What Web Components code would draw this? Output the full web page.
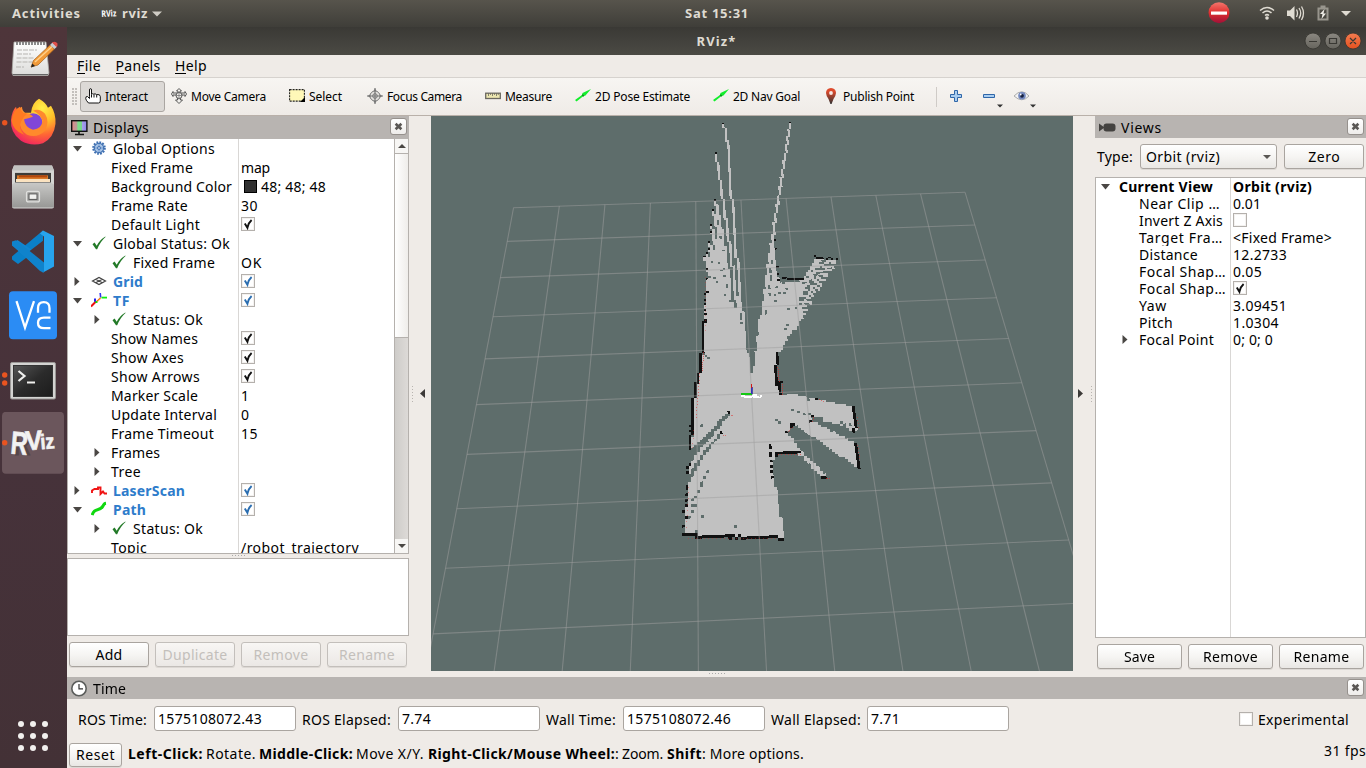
<!DOCTYPE html>
<html lang="en">
<head>
<meta charset="utf-8">
<title>RViz</title>
<style>
html,body{margin:0;height:100%;overflow:hidden}
body{font-family:"Noto Sans","Open Sans",sans-serif;font-size:14px;color:#000;background:#efebe7}
</style>
</head>
<body>
<rviz-desktop></rviz-desktop>
<script>
const define = (name, css, html, ready) => customElements.define(name, class extends HTMLElement {
  connectedCallback() {
    if (this.shadowRoot) return;
    const root = this.attachShadow({ mode: 'open' });
    const body = typeof html === 'function' ? html(this) : html;
    root.innerHTML = `<style>*{box-sizing:border-box}${css}</style>${body}`;
    if (ready) ready(this, root);
  }
});
const esc = s => s.replace(/&/g, '&amp;').replace(/</g, '&lt;');
// A single-line label that takes exactly w pixels.
const T = (text, w, bold) => `<fit-text w="${w}"${bold ? ' bold' : ''}>${esc(text)}</fit-text>`;
const svg = (w, h, inner, vb) => `<svg width="${w}" height="${h}" viewBox="${vb || `0 0 ${w} ${h}`}">${inner}</svg>`;

define('fit-text', `:host{display:inline-block;white-space:nowrap;line-height:normal;flex:none}
  :host([bold]){font-weight:700}span{display:inline-block}`, '<span><slot></slot></span>', (el, root) => {
  const w = +el.getAttribute('w'), span = root.querySelector('span');
  const natural = span.getBoundingClientRect().width, n = el.textContent.length;
  span.style.letterSpacing = (w - natural) / n + 'px';
  el.style.width = w + 'px';
});

define('check-box', `:host{display:block;width:14px;height:14px;border:1px solid #b4b0ac;background:#fff;box-shadow:inset 0 0 0 1px #f4f2f0;flex:none}
  svg{display:block}`, el => el.hasAttribute('on')
  ? svg(12, 12, `<path d="M2.8 5.6 5.4 9.8Q6.4 4.8 9.6 2" fill="none" stroke="${el.hasAttribute('blue') ? '#2a6db0' : '#111'}" stroke-width="1.9"/>`) : '');

define('push-button', `:host{display:flex;align-items:center;justify-content:center;height:26px;border:1px solid #a9a49f;border-radius:3px;
  background:linear-gradient(#fff,#f6f5f3 50%,#e9e7e4);box-shadow:0 1px 0 #dcd8d4}
  :host([disabled]){color:#c3bfbb;border-color:#c3bfbb;background:linear-gradient(#f8f6f4,#ebe8e5)}`, '<slot></slot>');

define('panel-title', `:host{display:flex;align-items:center;height:23px;background:#b8b4b1;padding:0 2px 0 4px}
  .i{width:17px;height:17px;margin-right:5px}.i svg{display:block}
  .x{margin-left:auto;width:17px;height:17px;border:1px solid #96918d;border-radius:3px;background:linear-gradient(#fff,#eeecea);margin-top:var(--x-shift,-3px)}
  .x svg{display:block}`,
  `<div class="i"><slot name="icon"></slot></div><slot></slot>
   <div class="x">${svg(15, 15, '<path d="M4.6 4.8l5.8 5.4M10.4 4.8l-5.8 5.4" stroke="#5a5754" stroke-width="2.6"/>')}</div>`);

const ICONS = {
  gear: svg(16, 16, '<circle cx="8" cy="8" r="5.6" fill="#9dbbe0" stroke="#3f6fb0" stroke-width="2.4" stroke-dasharray="1.7 1.2"/><circle cx="8" cy="8" r="4.6" fill="#a8c4e6" stroke="#4373b4"/><circle cx="8" cy="8" r="1.6" fill="#fff" stroke="#4373b4"/><path d="M8 4v8M4 8h8" stroke="#5d88c2" stroke-width=".7"/>'),
  ok: svg(16, 16, '<path d="M1.5 9.2 3.6 7.6 5.7 10.8Q9 4.6 14.3 1.6L14.5 2Q9.4 6.4 6.2 14.2H5Z" fill="#237a28"/>'),
  grid: svg(16, 16, '<path d="M1.500 8 8 4.500l6.500 3.500L8 11.500ZM4.700 6.200l6.600 3.600M11.300 6.200l-6.600 3.600" fill="none" stroke="#444" stroke-width="1.200"/>'),
  tf: svg(16, 16, '<path d="M0 14.5 5.5 9" stroke="#e11" stroke-width="2"/><path d="M6 9.5 9.5 6" stroke="#f22" stroke-width="1.6"/><path d="M4 9.8V6.4" stroke="#22e" stroke-width="2"/><path d="M4.5 10h2" stroke="#1d1" stroke-width="2"/><path d="M9.7 5.6 9.2 1" stroke="#33e" stroke-width="1.6"/><path d="M10.5 5.6h5.5" stroke="#1e1" stroke-width="1.8"/><path d="M6.5 9.5 10 5.5" stroke="#ee1" stroke-width="1"/>'),
  laser: svg(16, 16, '<path d="M1 11V8.500L3.500 7H7V5.500H9.500V12L12 9.500 13.500 11.500H16" fill="none" stroke="#f01414" stroke-width="1.900"/>'),
  path: svg(16, 16, '<path d="M1.200 14Q2.500 9.500 6.500 8.700T12 5Q13 2.500 15 2.300" fill="none" stroke="#10d810" stroke-width="3"/>')
};

define('prop-row', `:host{display:grid;grid-template-columns:var(--name-col) 1fr;height:var(--row-h)}
  .n,.v{display:flex;align-items:center;min-width:0;overflow:hidden;white-space:nowrap}
  .n{border-right:1px solid #d9d7d5}.v{padding-left:2px}
  .e{width:20px;display:flex;justify-content:center;flex:none;padding-right:2px}.i{width:20px;display:flex;justify-content:center;flex:none;margin-right:2px;margin-top:-2px;padding-left:1px}
  .t{padding-left:3px;display:flex}svg{display:block}check-box{margin-top:-2px}
  .s{width:13px;height:13px;background:#303030;border:1px solid #000;margin:0 4px 0 3px;flex:none}
  .blue{color:#2e7ccb}`, el => {
  const a = k => el.getAttribute(k), lvl = +a('level') || 0, st = a('state');
  const arrow = st === 'open' ? svg(9, 6, '<path d="M0 0h9L4.500 5.500Z" fill="#4a4744"/>')
    : st === 'shut' ? svg(6, 9, '<path d="M.500 0 5.500 4.500.500 9Z" fill="#4a4744"/>') : '';
  const bold = el.hasAttribute('bold') || el.hasAttribute('blue');
  return `<div class="n" style="padding-left:${lvl * 20}px"><div class="e">${arrow}</div>
    ${a('icon') ? `<div class="i">${ICONS[a('icon')]}</div>` : ''}
    <div class="t ${el.hasAttribute('blue') ? 'blue' : ''}">${T(a('name'), a('w'), bold)}</div></div>
    <div class="v">${el.hasAttribute('swatch') ? '<div class="s"></div>' : ''}${a('value') ? T(a('value'), a('vw'), bold) : ''}${a('check') !== null
      ? `<check-box ${a('check') === 'off' ? '' : 'on'} ${el.hasAttribute('blue') ? 'blue' : ''}></check-box>` : ''}</div>`;
});

const row = o => `<prop-row ${Object.entries(o).map(([k, v]) => v === true ? k : `${k}="${String(v).replace(/</g, '&lt;')}"`).join(' ')}></prop-row>`;

define('displays-panel', `:host{display:flex;flex-direction:column;width:342px;height:555px;--name-col:171px;--row-h:19px}
  .tree{height:415px;display:flex;overflow:hidden;border:solid #b5b1ad;border-width:0 1px 1px;background:#fff;flex:none}
  .rows{flex:1;overflow:hidden}.bar{width:14px;border-left:1px solid #b5b1ad;display:flex;flex-direction:column;background:#d8d5d1}
  .a{height:14px;display:grid;place-items:center;background:#f7f6f4;flex:none}
  .th{height:185px;background:linear-gradient(90deg,#fff,#efedea);border:solid #b5b1ad;border-width:1px 0}
  .tr{flex:1;background:linear-gradient(90deg,#ceccc9,#dddad7)}
  .g{height:4px;display:flex;justify-content:center;align-items:flex-start;padding-top:1px;gap:2px;flex:none}.g i{width:1px;height:1px;background:#aaa}
  .d{height:78px;background:#fff;border:1px solid #b5b1ad;flex:none}
  .b{display:flex;gap:6px;padding:6px 2px 0}.b push-button{width:80px;height:25px}`, () => `
  <panel-title>${svg(17, 17, '<defs><linearGradient id="m"><stop offset="0" stop-color="#e68787"/><stop offset=".35" stop-color="#b49e9a"/><stop offset=".4" stop-color="#7de08a"/><stop offset=".65" stop-color="#77d58b"/><stop offset=".7" stop-color="#a79eea"/><stop offset="1" stop-color="#8d88e8"/></linearGradient></defs><rect x=".7" y="1.700" width="15.200" height="10.600" fill="url(#m)" stroke="#111" stroke-width="1.400"/><path d="M8 13v2M4 15.500h9" stroke="#111" stroke-width="1.600"/>').replace('<svg', '<svg slot="icon"')}${T('Displays', 56)}</panel-title>
  <div class="tree"><div class="rows">${[
    { state: 'open', icon: 'gear', name: 'Global Options', w: 102 },
    { level: 1, name: 'Fixed Frame', w: 82, value: 'map', vw: 29 },
    { level: 1, name: 'Background Color', w: 121, value: '48; 48; 48', vw: 65, swatch: true },
    { level: 1, name: 'Frame Rate', w: 77, value: '30', vw: 17 },
    { level: 1, name: 'Default Light', w: 89, check: 'on' },
    { state: 'open', icon: 'ok', name: 'Global Status: Ok', w: 117 },
    { level: 1, icon: 'ok', name: 'Fixed Frame', w: 82, value: 'OK', vw: 21 },
    { state: 'shut', icon: 'grid', name: 'Grid', w: 30, blue: true, check: 'on' },
    { state: 'open', icon: 'tf', name: 'TF', w: 17, blue: true, check: 'on' },
    { level: 1, state: 'shut', icon: 'ok', name: 'Status: Ok', w: 70 },
    { level: 1, name: 'Show Names', w: 87, check: 'on' },
    { level: 1, name: 'Show Axes', w: 73, check: 'on' },
    { level: 1, name: 'Show Arrows', w: 89, check: 'on' },
    { level: 1, name: 'Marker Scale', w: 87, value: '1', vw: 8 },
    { level: 1, name: 'Update Interval', w: 106, value: '0', vw: 8 },
    { level: 1, name: 'Frame Timeout', w: 103, value: '15', vw: 17 },
    { level: 1, state: 'shut', name: 'Frames', w: 49 },
    { level: 1, state: 'shut', name: 'Tree', w: 30 },
    { state: 'shut', icon: 'laser', name: 'LaserScan', w: 72, blue: true, check: 'on' },
    { state: 'open', icon: 'path', name: 'Path', w: 33, blue: true, check: 'on' },
    { level: 1, state: 'shut', icon: 'ok', name: 'Status: Ok', w: 70 },
    { level: 1, name: 'Topic', w: 36, value: '/robot_trajectory', vw: 118 }].map(row).join('')}</div>
  <div class="bar"><div class="a">${svg(8, 4, '<path d="M4 0 8 4H0Z" fill="#4a4744"/>')}</div><div class="th"></div><div class="tr"></div><div class="a">${svg(8, 4, '<path d="M0 0h8L4 4Z" fill="#4a4744"/>')}</div></div></div>
  <div class="g">${'<i></i>'.repeat(5)}</div><div class="d"></div>
  <div class="b"><push-button>${T('Add', 27)}</push-button><push-button disabled>${T('Duplicate', 65)}</push-button><push-button disabled>${T('Remove', 55)}</push-button><push-button disabled>${T('Rename', 56)}</push-button></div>`);

define('views-panel', `:host{display:flex;flex-direction:column;width:271px;height:555px;--name-col:135px;--row-h:17px}
  panel-title{height:22px;--x-shift:-1px}.type{display:flex;align-items:center;padding:6px 2px 8px;gap:7px;flex:none}
  .type .c{width:138px;height:25px;justify-content:flex-start;padding-left:5px}.c svg{margin-left:auto;margin-right:5px}
  .z{width:80px;height:25px}
  .tree{height:461px;border:1px solid #b5b1ad;background:#fff;display:flex;flex-direction:column;flex:none}
  .fill{flex:1;width:135px;border-right:1px solid #d9d7d5}
  .b{display:flex;gap:6px;padding:6px 2px 0}.b push-button{width:85px;height:25px}`, () => `
  <panel-title>${svg(17, 17, '<path d="M0 4.500v8l5.500-4Z" fill="#444240"/><rect x="4.500" y="4.500" width="12" height="8" rx="3" fill="#444240"/>').replace('<svg', '<svg slot="icon"')}${T('Views', 41)}</panel-title>
  <div class="type">${T('Type:', 36)}<push-button class="c">${T('Orbit (rviz)', 74)}${svg(8, 4, '<path d="M0 0h8L4 4Z" fill="#5a5754"/>')}</push-button><push-button class="z">${T('Zero', 32)}</push-button></div>
  <div class="tree">${[
    { state: 'open', name: 'Current View', w: 94, bold: true, value: 'Orbit (rviz)', vw: 79 },
    { level: 1, name: 'Near Clip …', w: 81, value: '0.01', vw: 28 },
    { level: 1, name: 'Invert Z Axis', w: 84, check: 'off' },
    { level: 1, name: 'Target Fra…', w: 84, value: '<Fixed Frame>', vw: 99 },
    { level: 1, name: 'Distance', w: 59, value: '12.2733', vw: 54 },
    { level: 1, name: 'Focal Shap…', w: 87, value: '0.05', vw: 29 },
    { level: 1, name: 'Focal Shap…', w: 87, check: 'on' },
    { level: 1, name: 'Yaw', w: 28, value: '3.09451', vw: 54 },
    { level: 1, name: 'Pitch', w: 34, value: '1.0304', vw: 46 },
    { level: 1, state: 'shut', name: 'Focal Point', w: 75, value: '0; 0; 0', vw: 40 }].map(row).join('')}<div class="fill"></div></div>
  <div class="b"><push-button>${T('Save', 31)}</push-button><push-button>${T('Remove', 55)}</push-button><push-button>${T('Rename', 56)}</push-button></div>`);

// The 3D view: an occupancy map drawn cell by cell through the camera's homography, with the ground grid over it.
define('map-view', `:host{display:block;width:642px;height:555px}canvas{display:block}`, '<canvas width="642" height="555"></canvas>', (el, root) => {
  const ctx = root.querySelector('canvas').getContext('2d'), W = 642, H = 555;
  // unit square -> quad
  const q = [[513.6, 207.7], [965.1, 192.3], [1068.7, 540], [445.5, 568.3]].map(([x, y]) => [x - 431, y - 116]);
  const [[x0, y0], [x1, y1], [x2, y2], [x3, y3]] = q;
  const sx = x0 - x1 + x2 - x3, sy = y0 - y1 + y2 - y3, dx1 = x1 - x2, dx2 = x3 - x2, dy1 = y1 - y2, dy2 = y3 - y2;
  const den = dx1 * dy2 - dx2 * dy1, g = (sx * dy2 - dx2 * sy) / den, h = (dx1 * sy - sx * dy1) / den;
  const M = [x1 - x0 + g * x1, x3 - x0 + h * x3, x0, y1 - y0 + g * y1, y3 - y0 + h * y3, y0, g, h, 1];
  const [a, b, c, d, e, f, , , i] = M;
  const I = [e * i - f * h, c * h - b * i, b * f - c * e, f * g - d * i, a * i - c * g, c * d - a * f, d * h - e * g, b * g - a * h, a * e - b * d];
  const ap = (m, x, y) => { const w = m[6] * x + m[7] * y + m[8]; return [(m[0] * x + m[1] * y + m[2]) / w, (m[3] * x + m[4] * y + m[5]) / w]; };
  const fwd = (col, r) => ap(M, col / 10, r / 8);
  const cell = (x, y) => { const [u, v] = ap(I, x, y); return [Math.floor(u * 200), Math.floor(v * 160) + 100]; };
  const NU = 220, map = new Uint8Array(NU * 320);
  const mark = (x, y, v) => { const [cu, cv] = cell(x, y); map[cv * NU + cu] = v; };
  // A: top half, B: bottom half; both at three units per pixel
  const A = ([x, y]) => [640 + x / 3 - 431, 110 + y / 3 - 116], B = ([x, y]) => [640 + x / 3 - 431, 320 + y / 3 - 116];
  const poly = (F, pts, v) => {
    const p = pts.map(F);
    for (let cv = 0; cv < 310; cv++) for (let cu = 0; cu < 200; cu++) {
      const [x, y] = fwd((cu + .5) / 20, (cv - 99.5) / 20);
      let inside = false;
      for (let k = 0, j = p.length - 1; k < p.length; j = k++) {
        const [ax, ay] = p[k], [bx, by] = p[j];
        if ((ay > y) !== (by > y) && x < (bx - ax) * (y - ay) / (by - ay) + ax) inside = !inside;
      }
      if (inside) map[cv * NU + cu] = v;
    }
  };
  const line = (F, pts, v, keep = () => true) => {
    const p = pts.map(F);
    if (p.length === 1) mark(...p[0], v);
    for (let k = 1; k < p.length; k++) {
      const [ax, ay] = p[k - 1], [bx, by] = p[k], n = Math.ceil(Math.hypot(bx - ax, by - ay) * 2) || 1;
      for (let s = 0; s <= n; s++) if (keep(s)) mark(ax + (bx - ax) * s / n, ay + (by - ay) * s / n, v);
    }
  };
  const O = [336, 852];
  // free space, left corridor
  [[226, 272], [220, 300], [214, 347], [216, 366], [208, 398], [209, 418], [200, 432], [195, 443], [202, 478], [202, 508], [232, 292]]
    .forEach(p => line(A, [p, O], 1));
  poly(A, [[203, 490], [215, 470], [238, 478], [260, 480], [272, 530], [290, 585], [302, 640], [306, 662], [187, 662], [194, 600]], 1);
  poly(A, [[222, 420], [236, 390], [246, 440], [256, 470], [210, 490]], 1);
  // unseen slits between the beams
  [[266, 440, 284, 590], [289, 480, 303, 645]].forEach(([ax, ay, bx, by]) => line(A, [[ax, ay], [bx, by]], 0));
  line(A, [[251, 40], [262, 95], [269, 200], [281, 320], [292, 460], [301, 560], [312, 662]], 1);
  line(A, [[228, 132], [246, 250], [264, 370], [279, 480], [290, 570], [298, 662]], 1);
  // free space, right corridor and wing
  line(A, [[450, 42], [440, 110], [426, 195], [416, 265], [405, 330], [400, 375]], 1);
  poly(A, [[396, 372], [403, 372], [407, 440], [411, 490], [420, 516], [488, 512], [525, 447], [590, 450], [590, 462], [530, 555], [478, 640], [466, 662], [357, 662], [370, 560], [385, 440]], 1);
  // free space, lower room
  poly(B, [[195, -3], [317, -3], [319, 60], [326, 115], [334, 158], [341, 158], [343, 110], [349, 80], [357, -3], [476, -3], [465, 22], [440, 62], [424, 95], [414, 100], [410, 180], [420, 223], [460, 223], [530, 238], [640, 260], [650, 330], [638, 335], [518, 290], [518, 303],
    [645, 370], [658, 445], [625, 425], [520, 352], [464, 314], [440, 336], [485, 394], [520, 425], [560, 470], [545, 472], [520, 450], [485, 405], [402, 400], [400, 480], [408, 500], [415, 570], [426, 600], [434, 655], [130, 645], [138, 600], [146, 500], [150, 440], [158, 385], [160, 235], [170, 187], [180, 160], [190, 100]], 1);
  // unseen wedges
  poly(B, [[278, 272], [262, 278], [205, 338], [172, 366], [156, 386], [154, 425], [180, 388], [215, 350], [245, 314]], 0);
  poly(B, [[246, 338], [222, 372], [190, 410], [165, 455], [146, 492], [148, 462], [172, 425], [190, 388], [232, 345]], 0);
  line(B, [[228, 348], [160, 425]], 1, s => s % 8 < 5);
  [[184, 316], [204, 455], [196, 472], [187, 487], [187, 500], [178, 515], [169, 532], [160, 540], [160, 556], [169, 556], [160, 575], [152, 588], [187, 589], [169, 634], [290, 619], [412, 299], [421, 306], [458, 266], [461, 268], [478, 274], [488, 280], [506, 284], [504, 238],
    [600, 306], [598, 312], [615, 312], [618, 320], [630, 315], [534, 296], [545, 298], [560, 306], [575, 312], [590, 318], [605, 322], [620, 326], [196, 107], [206, 112], [300, 8], [435, 27], [443, 15]].forEach(p => line(B, [p], 0));
  [[232, 518], [260, 527], [272, 573], [256, 556], [285, 590], [222, 506], [210, 500], [250, 500], [243, 480], [238, 458], [258, 535], [391, 486], [391, 496], [397, 512], [388, 530], [405, 558], [430, 548], [408, 530], [432, 520], [447, 597], [472, 597], [378, 604], [375, 612], [440, 536], [405, 575], [418, 548]].forEach(p => line(A, [p], 0));
  line(A, [[395, 455], [388, 560]], 0, s => s % 16 < 5);
  [[553, 454, 484, 580, 12, 6], [564, 456, 488, 596, 9, 3], [573, 458, 494, 606, 10, 3], [582, 462, 500, 606, 11, 3], [543, 460, 478, 575, 14, 3], [521, 470, 488, 530, 14, 3]].forEach(([ax, ay, bx, by, period, on], k) =>
    line(A, [[ax, ay], [bx, by]], 0, s => (s + k * 4) % period < on));
  // walls
  const wall = (F, list) => list.forEach(w => line(F, w, 2));
  wall(A, [[[251, 38]], [[450, 39]], [[228, 129]], [[226, 269]], [[220, 300]], [[214, 345]], [[214, 366]], [[208, 397]], [[208, 417]], [[200, 430]], [[195, 441]], [[202, 477]], [[202, 508]], [[204, 546]], [[196, 552]], [[196, 570]], [[196, 584]], [[197, 598]], [[197, 610]], [[198, 628], [198, 636]], [[190, 640], [190, 662]],
    [[407, 390]], [[408, 416]], [[412, 470]], [[415, 491]], [[416, 510]], [[428, 504], [438, 504]], [[444, 507], [486, 507]], [[525, 438]], [[531, 443], [550, 443]], [[560, 447]], [[570, 444], [578, 448]], [[591, 448]]]);
  wall(B, [[[192, 3], [192, 12]], [[190, 12], [190, 95]], [[185, 98], [184, 155]], [[177, 160], [177, 186]], [[169, 187], [168, 232]], [[161, 235], [160, 340]], [[152, 317]], [[152, 330]], [[152, 345], [152, 385]],
    [[152, 433]], [[142, 441]], [[142, 457]], [[142, 499]], [[142, 508]], [[142, 522]], [[142, 540]], [[142, 556]], [[134, 575]], [[142, 592]], [[134, 617]],
    [[132, 643], [164, 643]], [[166, 649], [250, 650]], [[252, 646], [266, 646]], [[272, 655]], [[281, 646]], [[290, 655]], [[299, 646]], [[308, 654], [384, 652]], [[386, 649], [413, 649]], [[420, 658], [432, 658]],
    [[391, 375], [391, 385]], [[396, 401], [394, 409]], [[410, 398], [480, 396]], [[411, 406]], [[394, 425]], [[396, 438]], [[398, 455]], [[398, 469]],
    [[412, 97], [414, 132]], [[407, 137], [409, 175]], [[411, 177], [413, 190]], [[421, 187], [430, 187]], [[421, 192], [421, 222]],
    [[530, 237]], [[641, 260], [645, 290]], [[648, 292], [650, 320]], [[643, 327]], [[643, 334]], [[650, 373], [652, 405]], [[655, 408], [658, 443]], [[548, 472], [558, 472]],
    [[460, 314], [451, 317]], [[450, 324]], [[440, 333]], [[514, 289]], [[514, 301]], [[268, 277]], [[245, 338]]]);

  const img = ctx.createImageData(W, H), col = [[94, 109, 107], [193, 193, 193], [17, 17, 17]];
  for (let y = 0; y < H; y++) for (let x = 0; x < W; x++) {
    const [cu, cv] = cell(x + .5, y + .5);
    const v = cu >= 0 && cu < 200 && cv >= 0 && cv < 310 ? map[cv * NU + cu] : 0, k = (y * W + x) * 4;
    img.data.set([...col[v], 255], k);
  }
  ctx.putImageData(img, 0, 0);
  ctx.strokeStyle = 'rgba(160,160,160,.5)'; ctx.lineWidth = 1.1;
  for (let k = 0; k <= 10; k++) for (const [p, r] of [[fwd(k, 0), fwd(k, 10)], [fwd(0, k), fwd(10, k)]]) {
    ctx.beginPath(); ctx.moveTo(...p); ctx.lineTo(...r); ctx.stroke();
  }
  // laser returns
  const dots = (ax, ay, bx, by, step, al) => {
    ctx.fillStyle = `rgba(225,40,40,${al})`;
    const [sx0, sy0] = B([ax, ay]), [ex, ey] = B([bx, by]), n = Math.max(1, Math.round(Math.hypot(ex - sx0, ey - sy0) / step));
    for (let k = 0; k <= n; k++) ctx.fillRect(Math.round(sx0 + (ex - sx0) * k / n), Math.round(sy0 + (ey - sy0) * k / n), 1, 1);
  };
  dots(196, -130, 196, 30, 5, .35); dots(189, 95, 186, 150, 2, .6); dots(178, 160, 167, 290, 3, .55); dots(160, 330, 156, 380, 4, .4);
  dots(412, 140, 416, 182, 2, .7); dots(427, 192, 427, 222, 2, .7); dots(415, 403, 480, 403, 3, .6); dots(145, 655, 405, 655, 4, .4);
  dots(455, 320, 443, 334, 2, .5); dots(518, 292, 517, 303, 2, .6); dots(652, 290, 653, 320, 3, .5); dots(652, 375, 657, 415, 3, .5);
  dots(557, 473, 567, 473, 2, .6); dots(537, 238, 548, 243, 2, .5); dots(274, 286, 276, 286, 2, .5); dots(250, 344, 254, 344, 2, .5); dots(145, 500, 138, 620, 6, .4);
  // robot axes
  const R = (x, y, w, hh, s) => { ctx.fillStyle = s; ctx.fillRect(x - 431, y - 116, w, hh); };
  R(741, 393, 11, 2, '#12c812'); R(751, 384, 1, 5, '#d01818'); R(751, 388, 1, 6, '#3434b8'); R(752, 387, 1, 7, '#5050a8');
  R(741, 395, 4, 2, '#fff'); R(744, 396, 8, 2, '#fff'); R(752, 395, 3, 2, '#fff'); R(753, 394, 4, 4, '#fff'); R(757, 396, 2, 2, '#fff'); R(760, 395, 2, 2, '#fff'); R(759, 397, 2, 1, '#fff');
});

define('side-grip', `:host{display:flex;align-items:center;justify-content:center;width:22px;height:555px;position:relative}
  .d{position:absolute;top:270px;width:1px;height:17px;background:repeating-linear-gradient(#b8b4b0 0 1px,transparent 1px 3px)}
  :host([side=left]) .d{left:3px}:host([side=right]) .d{right:3px}svg{display:block}:host([side=left]) svg{margin-left:5px}:host([side=right]) svg{margin-right:8px}`,
  el => `<div class="d"></div>${svg(5, 9, el.getAttribute('side') === 'left' ? '<path d="M5 0v9L0 4.500Z" fill="#3c3a38"/>' : '<path d="M0 0v9l5-4.500Z" fill="#3c3a38"/>')}`);

define('time-panel', `:host{display:block}panel-title{height:22px;--x-shift:-1px}
  .f{display:flex;align-items:center;height:25px;margin-top:7px;padding-left:11px;padding-right:17px}
  .f>fit-text{margin-top:2px}
  .in{height:25px;width:142px;border:1px solid #aaa5a0;border-radius:3px;background:#fff;display:flex;align-items:center;padding-left:3px;padding-bottom:1px;margin-right:6px}
  .f check-box{margin-left:auto;margin-right:5px}
  .s{display:flex;align-items:center;margin-top:11px;padding-left:2px;height:25px}.s push-button{width:53px;height:24px;margin-right:6px}
  .s span{margin-top:-2px}.s .fps{margin-left:auto;margin-top:-8px}.s fit-text{flex:none}`, () => `
  <panel-title>${svg(17, 17, '<circle cx="8" cy="8.500" r="7.200" fill="#fff" stroke="#5b5d5b" stroke-width="1.600"/><path d="M8 4v4.800h4" fill="none" stroke="#333" stroke-width="1.200"/>').replace('<svg', '<svg slot="icon"')}${T('Time', 33)}</panel-title>
  <div class="f">${[['ROS Time:', 69, '1575108072.43', 104, 7], ['ROS Elapsed:', 89, '7.74', 29, 7], ['Wall Time:', 70, '1575108072.46', 104, 7], ['Wall Elapsed:', 90, '7.71', 29, 6]]
    .map(([l, w, v, vw, gap]) => `${T(l, w)}<div class="in" style="margin-left:${gap}px">${T(v, vw)}</div>`).join('')}<check-box></check-box>${T('Experimental', 91)}</div>
  <div class="s"><push-button>${T('Reset', 39)}</push-button>${[['Left-Click:', 75, 1, 3], ['Rotate.', 50, 0, 3], ['Middle-Click:', 94, 1, 3], ['Move X/Y.', 68, 0, 4], ['Right-Click/Mouse Wheel:', 187, 1, 0], [': Zoom.', 48, 0, 4], ['Shift', 35, 1, 0], [': More options.', 102, 0, 0]]
    .map(([t, w, bd, m]) => `<span style="margin-right:${m}px">${T(t, w, bd)}</span>`).join('')}<span class="fps">${T('31 fps', 42)}</span></div>`);

const TOOLS = [
  ['Interact', 43, 85, '<path d="M4.500 8.500V2Q4.500.600 5.500.600T6.500 2V6.300Q7.500 5.200 8.800 6.200 10 5.300 11.500 6.500 15.300 6 15.300 8.500V13Q15.300 15 13.500 15H3.500Q.700 12 .700 10.500 .700 8 2.500 8.500L4.500 10.500Z" fill="#fff" stroke="#111"/><path d="M6.500 6.500v3M9 6.500v3M11.700 7V9.500" stroke="#111"/>'],
  ['Move Camera', 75, 118, '<g fill="#f3f1ee" stroke="#555" stroke-width="1"><path d="M8 .500 10.500 3H9v2h5V3.500L15.500 6 14 8.500V7H9.800M8 .500 5.500 3H7v2H2V3.500L.500 6 2 8.500V7h4.200M6.500 7v5H4.500L8 15.500 11.500 12h-2V7"/><circle cx="8" cy="7.500" r="3"/></g><path d="M5 7.500h6M8 4.500v7" stroke="#777" stroke-width=".8"/>'],
  ['Select', 33, 78, '<rect x=".600" y="1.600" width="14.800" height="11.500" fill="#fff8b8" stroke="#222" stroke-width="1.100" stroke-dasharray="2 1"/><path d="M16 9v5h-5Z" fill="#000"/>'],
  ['Focus Camera', 75, 118, '<g fill="none" stroke="#777"><circle cx="8" cy="8" r="5" fill="#e4e2df"/><circle cx="8" cy="8" r="2.300"/><path d="M8 0v16M0 8h16" stroke-width="1.200"/></g><path d="M8 .500 9.500 3h-3ZM8 15.500 6.500 13h3ZM.500 8 3 6.500v3ZM15.500 8 13 9.500v-3Z" fill="#777"/>'],
  ['Measure', 47, 90, '<rect x=".700" y="5.200" width="14.600" height="5.300" fill="#ece6b0" stroke="#6b6860" stroke-width="1.300"/><path d="M3.500 5v3M5.500 5v2M7.500 5v3M9.500 5v2M11.500 5v3M13.300 5v2" stroke="#6b6860" stroke-width=".8"/>'],
  ['2D Pose Estimate', 95, 138, '<path d="M0 12 7 7 7.500 5 16 1 10.500 7.500 8.500 8 1.500 13.500Z" fill="#12ee2c"/><path d="M7 7 9 8" stroke="#0a9b1a" stroke-width="1.500"/>'],
  ['2D Nav Goal', 67, 110, '<path d="M0 12 7 7 7.500 5 16 1 10.500 7.500 8.500 8 1.500 13.500Z" fill="#12ee2c"/><path d="M7 7 9 8" stroke="#0a9b1a" stroke-width="1.500"/>'],
  ['Publish Point', 71, 118, '<defs><linearGradient id="p" x2="0" y2="1"><stop offset=".2" stop-color="#dd4a2c"/><stop offset="1" stop-color="#333"/></linearGradient></defs><path d="M8 0Q13 .300 13 5 12.800 8 10.500 11L8.600 16H7.400L5.500 11Q3.200 8 3 5 3 .300 8 0Z" fill="url(#p)"/><circle cx="8" cy="5" r="1.900" fill="#f6e8e4"/>']
];
define('tool-bar', `:host{display:flex;align-items:center;height:39px;border-top:1px solid #d6d2ce;border-bottom:1px solid #b9b0a9;background:linear-gradient(#f7f5f2,#efebe7);font-size:12px;padding-left:5px}
  .h{width:5px;height:18px;background:radial-gradient(circle at 1px 1px,#c0bcb8 .7px,transparent .8px) 0 0/3px 3px;margin-right:3px}
  .t{display:flex;align-items:center;height:31px;border:1px solid transparent;padding-left:4px}
  .t svg{margin-right:4px;display:block;margin-top:-1px}.on{background:#dcd9d6;border-color:#aaa6a2;border-radius:3px;margin-right:1px}
  .sep{width:1px;height:20px;background:#cfcbc7}.q{display:flex;margin-left:13px;margin-top:-1px}.q svg{display:block}`, () => `
  <div class="h"></div>${TOOLS.map(([t, w, bw, ic], k) => `<div class="t ${k ? '' : 'on'}" style="width:${bw}px">${svg(16, 16, ic)}${T(t, w)}</div>`).join('')}
  <div class="sep"></div><div class="q">${svg(90, 24, '<path d="M4.500 6.500h3v4h4v3h-4v4h-3v-4h-4v-3h4Z" fill="#a9cdf0" stroke="#2f66a8"/><path d="M33.500 10.500h11v3h-11Z" fill="#a9cdf0" stroke="#2f66a8"/><path d="M47 20.500h6l-3 3ZM80 20.500h6l-3 3Z" fill="#333"/><path d="M64 12Q72 3.500 79 12 72 19.500 64 12Z" fill="#f3f3f3" stroke="#aaa"/><circle cx="72" cy="11.800" r="3.800" fill="#7287bd"/><circle cx="72" cy="11.800" r="1.900" fill="#16203f"/><circle cx="70.700" cy="10.500" r=".9" fill="#fff"/>')}</div>`);

define('menu-bar', `:host{display:flex;align-items:center;height:22px;padding-left:10px;padding-bottom:2px;box-sizing:border-box;gap:14.500px;background:#efebe7}
  u{text-decoration:none;border-bottom:1.500px solid #000;display:inline-block;line-height:15px}`,
  () => `<fit-text w="24"><u>F</u>ile</fit-text><fit-text w="45"><u>P</u>anels</fit-text><fit-text w="32"><u>H</u>elp</fit-text>`);

define('title-bar', `:host{display:flex;align-items:center;height:28px;background:linear-gradient(#3a3935,#4b4a44);color:#dfdbd2;font-size:13px;position:relative;justify-content:center}
  svg{position:absolute;right:4px;top:5px}`,
  () => `${T('RViz*', 40, 1)}${svg(58, 19, '<defs><linearGradient id="g" x2="0" y2="1"><stop stop-color="#8b8881"/><stop offset="1" stop-color="#66645d"/></linearGradient><linearGradient id="o" x2="0" y2="1"><stop stop-color="#f37c50"/><stop offset="1" stop-color="#e5511f"/></linearGradient></defs><circle cx="9" cy="9" r="8" fill="url(#g)" stroke="#35342f" stroke-width=".8"/><circle cx="29" cy="9" r="8" fill="url(#g)" stroke="#35342f" stroke-width=".8"/><circle cx="49" cy="9" r="8" fill="url(#o)" stroke="#35342f" stroke-width=".8"/><path d="M5 9.500h8M25.500 6.500h7v5h-7ZM46 6l6 6M52 6l-6 6" fill="none" stroke="#393833" stroke-width="1.200"/>')}`);

define('system-bar', `:host{display:grid;grid-template-columns:685px 64px 1fr;align-items:center;height:27px;background:linear-gradient(#57544c,#3f3e39);color:#dfdbd2;font-size:13px}
  fit-text{margin-top:-2px}
  .l{display:flex;align-items:center;padding-left:12px}.l svg{display:block}.r{display:flex;justify-content:flex-end}.r svg{display:block}`, () => `
  <div class="l">${T('Activities', 69, 1)}<div style="width:20px"></div>${svg(16, 14, '<text x="0" y="10" font-size="9" font-weight="700" fill="#fff" textLength="15" lengthAdjust="spacingAndGlyphs" transform="rotate(-3)">RViz</text>')}<div style="width:5px"></div>${T('rviz', 26, 1)}<div style="width:4px"></div>${svg(10, 6, '<path d="M0 .500h10L5 5.500Z" fill="#cfccc4"/>')}</div>
  ${T('Sat 15:31', 64, 1)}
  <div class="r">${svg(160, 27, '<defs><linearGradient id="n" x2="0" y2="1"><stop stop-color="#f2766c"/><stop offset=".5" stop-color="#de2f2f"/><stop offset="1" stop-color="#a01038"/></linearGradient></defs><circle cx="13" cy="12.700" r="10.500" fill="url(#n)"/><rect x="5" y="11.500" width="16" height="3.200" fill="#fff"/><g fill="none" stroke="#dfdbd2" stroke-width="1.500"><path d="M54 10.500Q61 4.500 68 10.500M56.500 13Q61 9 65.500 13M59 15.500Q61 13.800 63 15.500"/><path d="M90.500 9.500Q92.500 13 90.500 17M93 8Q96.500 13 93 18.500M95.500 6.500Q99.500 13 95.500 20" stroke-width="1.300"/></g><circle cx="61" cy="18" r="1.800" fill="#dfdbd2"/><path d="M81 10.500h3l4.500-4.500V20.500L84 16h-3Z" fill="#dfdbd2"/><path d="M112.500 8.500h9v11h-9ZM114.500 6.500h5" fill="none" stroke="#98958d" stroke-width="2"/><path d="M118.500 9l-4.500 5h2.500l-1 5 4.500-5.500h-2.500Z" fill="#f0eee8"/><path d="M135 11h10l-5 5Z" fill="#dfdbd2"/>')}</div>`);

const DOCK = [
  '<defs><linearGradient id="pa" x2="0" y2="1"><stop stop-color="#fff"/><stop offset="1" stop-color="#dcdcda"/></linearGradient></defs><path d="M14 42H46L49 73 48 75.500H13L12 73Z" fill="url(#pa)" stroke="#aaa9a5" stroke-width=".8"/><path d="M12.500 74.500h35.500" stroke="#666" stroke-width="1.200"/><path d="M17 45v-3M20 45v-3M23 45v-3M26 45v-3M29 45v-3M32 45v-3M35 45v-3M38 45v-3M41 45v-3M44 45v-3" stroke="#777" stroke-width="1.700"/><path d="M17 50h20M17 54h14M16.500 58h17M16.500 62h16M16 67h8" stroke="#b7b5b0" stroke-dasharray="5 1"/><path d="M31 67 33.500 60.500 50 45 54.500 49 38 65Z" fill="#f29a38" stroke="#a45f18" stroke-width=".7"/><path d="M35 62 52 46.500" stroke="#ffd08a" stroke-width="1.500"/><path d="M50 45 52.500 42.500 57 46.800 54.500 49Z" fill="#c8ccd0"/><path d="M52 42.500Q55.500 40.800 57.500 43.500 57.800 46 56.500 47Z" fill="#e2504a"/><path d="M31 67.500 32.300 63.500 35 66Z" fill="#222"/>',
  '<defs><radialGradient id="ff" cx=".7" cy=".2" r=".9"><stop stop-color="#fff04a"/><stop offset=".35" stop-color="#ffbd28"/><stop offset=".65" stop-color="#ff6634"/><stop offset="1" stop-color="#ee1a68"/></radialGradient></defs><path d="M39 99Q46 103 48 108L51 106Q56 114 55.500 124 54 138 43 143.500 31 147 21 141 10 133 11 120 12 111 16 107L17 111Q19 108 22 107 22 111 25 113L31 113Q32 103 39 99Z" fill="url(#ff)"/><circle cx="33" cy="123" r="9.500" fill="#8146d8"/><path d="M23 114Q29 112 33 117 28 118.500 24 119.500 25 128 33 130 42 129 42.500 121 40 114 33 111 39 108 45 114 50 122 45 131 37 139 27 135 19 130 20 121Z" fill="#ff8a2c"/><path d="M11.500 121Q13 110 20 107 20 113 27 114 23 117 21 122 18 128 24 135 13 131 11.500 121Z" fill="#ff7a22"/>',
  '<defs><linearGradient id="fc" x2="0" y2="1"><stop stop-color="#c9c9c7"/><stop offset="1" stop-color="#989896"/></linearGradient></defs><g transform="translate(0 .8)"><path d="M14 165H52L54 170V206Q54 208 52 208H14Q12 208 12 206V170Z" fill="#d6d6d4"/><path d="M14 165H52L54 170H12Z" fill="#c2c2c0"/><rect x="15" y="172.500" width="36" height="10" fill="#3e3c39"/><path d="M17 175h31v6H17Z" fill="#d97a2a"/><path d="M16 178.500h34v3H16Z" fill="#fae2c0"/><path d="M19 176h28" stroke="#b4470c" stroke-width="2"/><path d="M15 182H51L54 184V207H12V184Z" fill="url(#fc)"/><rect x="26.500" y="191" width="13" height="10.500" rx="2" fill="#a9a9a7" stroke="#e0e0de" stroke-width="1.200"/><rect x="29" y="193.500" width="8" height="5.500" fill="#f2f2f0" stroke="#555"/></g>',
  '<path d="M43 230V245L18 263.500 12 259V256Z" fill="#0a80c8"/><path d="M12 244 17.500 239.500 43 257V272L12 245Z" fill="#1286d0"/><path d="M43 230 54 235.500V266L43 272 40 269 44 266V236L40 233Z" fill="#27a4ee"/><path d="M29 251 44 239.500V263Z" fill="#4a343a"/><path d="M12 241 16 239.800 44 262V272L40 270.500 12 244Z" fill="#0f83cc"/>',
  '<rect x="9" y="291" width="48" height="48" rx="4" fill="#2b8cf4"/><path d="M16.500 301 25 327.500 34 301" fill="none" stroke="#fff" stroke-width="2.300"/><path d="M38 312.500V308Q38 302 43.800 302T49.500 308V312.500M50.500 317.500H44Q38 317.500 38 322.700T44 328H50.500" fill="none" stroke="#fff" stroke-width="2.300"/>',
  '<defs><linearGradient id="te" x2="1" y2="1"><stop stop-color="#555"/><stop offset=".5" stop-color="#2b2b2b"/><stop offset="1" stop-color="#1c1c1c"/></linearGradient></defs><rect x="10.500" y="362.500" width="45" height="36.500" rx="1.500" fill="#d4d4d2" stroke="#9a9896"/><rect x="13.500" y="365.500" width="39" height="31" fill="url(#te)" stroke="#333"/><path d="M18.500 371 24.500 376 18.500 381" fill="none" stroke="#f0f0ee" stroke-width="2.200"/><path d="M27 382.500h8" stroke="#f0f0ee" stroke-width="2"/>',
  '<rect x="2" y="412" width="62" height="62" rx="4" fill="#6b565c"/><g font-weight="700" font-family="Liberation Sans,sans-serif"><g fill="#54464a" stroke="#54464a" stroke-width=".8"><text x="13.500" y="455.500" font-size="32" textLength="17" lengthAdjust="spacingAndGlyphs">R</text></g><g fill="#f2f2f2" stroke="#f2f2f2" stroke-width=".7"><text x="11" y="454.500" font-size="32" textLength="17" lengthAdjust="spacingAndGlyphs" transform="rotate(5 19 443)">R</text><text x="25.500" y="450" font-size="27" textLength="17" lengthAdjust="spacingAndGlyphs" transform="rotate(-4 34 443)">V</text><text x="40.500" y="449" font-size="21" textLength="14" lengthAdjust="spacingAndGlyphs" transform="rotate(-5 47 443)">iz</text></g></g>'
];
const RUN = { 1: [123], 5: [375, 383], 6: [443] };
define('app-dock', `:host{display:flex;flex-direction:column;width:67px;background:linear-gradient(#4e353a,#46323a 60%,#433136)}
  svg{display:block;flex:none}.apps{margin-top:auto;margin-bottom:14px}`, () => DOCK.map((s, k) =>
  svg(67, 64.2, s + (RUN[k] || []).map(y => `<circle cx="4.700" cy="${y}" r="2.700" fill="#e95420"/>`).join(''), `0 ${27 + 64.2 * k} 67 64.2`)).join('')
  + svg(67, 36, [6, 18, 30].map(y => [21, 33, 45].map(x => `<circle cx="${x}" cy="${y}" r="3" fill="#f2f0ee"/>`).join('')).join('')).replace('<svg', '<svg class="apps"'));

define('rviz-desktop', `:host{display:flex;flex-direction:column;height:768px;width:1366px;overflow:hidden}
  .w{display:flex;flex:1;min-height:0}.win{flex:1;background:#efebe7;min-width:0}
  .m{display:flex}.g{height:6px;display:flex;justify-content:center;align-items:flex-start;padding-top:2px;gap:2px}.g i{width:1px;height:1px;background:#aaa}`, `
  <system-bar></system-bar><div class="w"><app-dock></app-dock><div class="win"><title-bar></title-bar><menu-bar></menu-bar><tool-bar></tool-bar>
  <div class="m"><displays-panel></displays-panel><side-grip side="left"></side-grip><map-view></map-view><side-grip side="right"></side-grip><views-panel></views-panel></div>
  <div class="g"><i></i><i></i><i></i><i></i><i></i><i></i></div><time-panel></time-panel></div></div>`);
</script>
</body>
</html>
